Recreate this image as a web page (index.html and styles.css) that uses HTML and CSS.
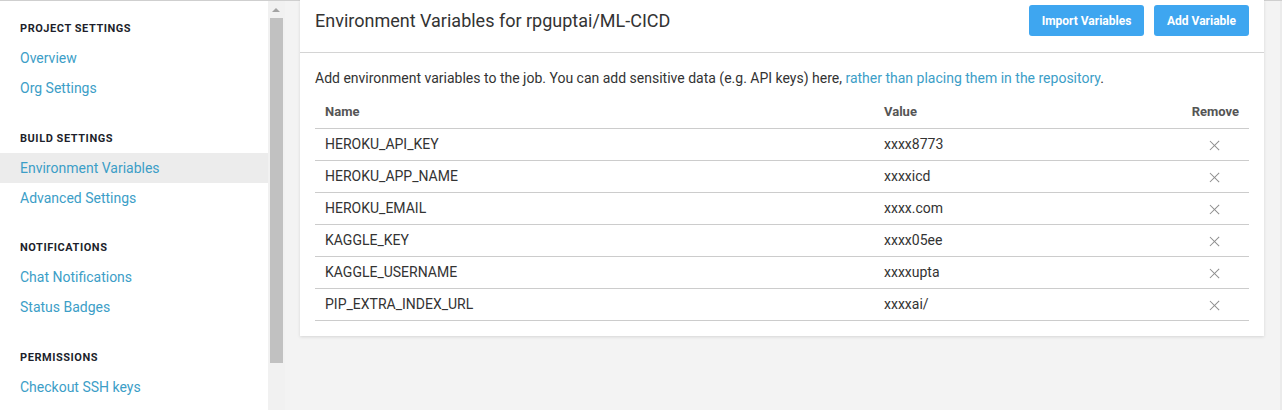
FILE: index.html
```html
<!DOCTYPE html>
<html>
<head>
<meta charset="utf-8">
<link rel="stylesheet" href="styles.css">
</head>
<body>
<div class="page">
  <nav class="sidebar">
    <div class="section">
      <h4 class="heading">Project Settings</h4>
      <a class="link">Overview</a>
      <a class="link">Org Settings</a>
    </div>
    <div class="section">
      <h4 class="heading">Build Settings</h4>
      <a class="link active">Environment Variables</a>
      <a class="link">Advanced Settings</a>
    </div>
    <div class="section">
      <h4 class="heading">Notifications</h4>
      <a class="link">Chat Notifications</a>
      <a class="link">Status Badges</a>
    </div>
    <div class="section">
      <h4 class="heading">Permissions</h4>
      <a class="link">Checkout SSH keys</a>
    </div>
  </nav>
  <div class="scrollbar">
    <div class="arrow"></div>
    <div class="thumb"></div>
  </div>
  <main class="main">
    <section class="card">
      <header class="card-header">
        <h2 class="title">Environment Variables for rpguptai/ML-CICD</h2>
        <div class="actions">
          <button class="btn btn-import">Import Variables</button>
          <button class="btn btn-add">Add Variable</button>
        </div>
      </header>
      <div class="card-body">
        <p class="desc">Add environment variables to the job. You can add sensitive data (e.g. API keys) here, <a class="desc-link">rather than placing them in the repository</a>.</p>
        <table class="vars">
          <thead>
            <tr><th class="col-name">Name</th><th class="col-value">Value</th><th class="col-remove">Remove</th></tr>
          </thead>
          <tbody>
            <tr><td>HEROKU_API_KEY</td><td>xxxx8773</td><td class="rm"><span class="x"></span></td></tr>
            <tr><td>HEROKU_APP_NAME</td><td>xxxxicd</td><td class="rm"><span class="x"></span></td></tr>
            <tr><td>HEROKU_EMAIL</td><td>xxxx.com</td><td class="rm"><span class="x"></span></td></tr>
            <tr><td>KAGGLE_KEY</td><td>xxxx05ee</td><td class="rm"><span class="x"></span></td></tr>
            <tr><td>KAGGLE_USERNAME</td><td>xxxxupta</td><td class="rm"><span class="x"></span></td></tr>
            <tr><td>PIP_EXTRA_INDEX_URL</td><td>xxxxai/</td><td class="rm"><span class="x"></span></td></tr>
          </tbody>
        </table>
      </div>
    </section>
  </main>
  <div class="edge"></div>
</div>
</body>
</html>
```

FILE: styles.css
```css
* { box-sizing: border-box; }
html, body { margin: 0; padding: 0; }
body {
  font-family: Roboto, "Liberation Sans", Arial, sans-serif;
  color: #333;
  background: #f3f3f3;
  width: 1282px;
  height: 410px;
  overflow: hidden;
}
.page {
  display: flex;
  height: 410px;
  border-top: 1px solid #cfcfcf;
}
.sidebar {
  width: 268px;
  flex: none;
  background: #fff;
  padding-top: 18px;
}
.section { display: flex; flex-direction: column; margin-bottom: 25.5px; }
.heading {
  margin: 0 0 4px;
  padding-left: 20px;
  height: 20px;
  line-height: 20px;
  font-size: 11px;
  font-weight: 700;
  letter-spacing: 0.55px;
  text-transform: uppercase;
  color: #1d1f2c;
}
.link {
  display: block;
  height: 30px;
  line-height: 30px;
  padding-left: 20px;
  font-size: 14px;
  color: #3c9ec7;
  text-decoration: none;
}
.link.active { background: #ececec; }
.scrollbar {
  width: 17px;
  flex: none;
  background: #f1f1f1;
  position: relative;
}
.arrow {
  position: absolute;
  left: 4px;
  top: 7px;
  width: 0; height: 0;
  border-left: 4px solid transparent;
  border-right: 4px solid transparent;
  border-bottom: 4px solid #a3a3a3;
}
.thumb {
  position: absolute;
  left: 2px;
  top: 17px;
  width: 13px;
  height: 345px;
  background: #c1c1c1;
}
.main {
  width: 995px;
  flex: none;
  background: #f3f3f3;
  padding: 0 16px 0 15px;
}
.edge {
  flex: 1;
  background: #ebebeb;
}
.card {
  background: #fff;
  margin-top: -1px;
  box-shadow: 0 1px 3px rgba(0,0,0,0.12);
}
.card-header {
  display: flex;
  align-items: center;
  justify-content: space-between;
  height: 53px;
  padding: 0 15px 11px 15px;
  border-bottom: 1px solid #d4d4d4;
}
.title {
  margin: 0;
  font-size: 18px;
  font-weight: 400;
  color: #333;
}
.actions { display: flex; gap: 10px; }
.btn {
  height: 31px;
  border: none;
  border-radius: 3px;
  background: #3ea6f0;
  color: #fff;
  font-family: Roboto, "Liberation Sans", Arial, sans-serif;
  font-size: 12px;
  font-weight: 700;
  padding: 0;
  white-space: nowrap;
}
.btn-import { width: 115px; }
.btn-add { width: 95px; }
.card-body { padding: 15px 15px 15px; }
.desc {
  margin: 0 0 8px;
  font-size: 14px;
  line-height: 20px;
  color: #333;
}
.desc-link { color: #3c9ec7; text-decoration: none; }
.vars {
  width: 100%;
  border-collapse: collapse;
  font-size: 14px;
}
.vars th {
  height: 32px;
  text-align: left;
  font-size: 13px;
  font-weight: 700;
  color: #555;
  padding: 0 10px;
  border-bottom: 1px solid #cccccc;
}
.vars th.col-name { width: 559px; }
.vars th.col-remove { text-align: right; width: 100px; }
.vars td {
  height: 32px;
  padding: 0 10px;
  border-bottom: 1px solid #cccccc;
  color: #333;
}
.vars td.rm { text-align: right; padding-right: 29px; }
.x {
  display: inline-block;
  width: 11px;
  height: 11px;
  position: relative;
  vertical-align: middle;
}
.x::before, .x::after {
  content: "";
  position: absolute;
  left: 5px;
  top: -1px;
  width: 1.3px;
  height: 13px;
  background: #8c8c8c;
}
.x::before { transform: rotate(45deg); }
.x::after { transform: rotate(-45deg); }
```
